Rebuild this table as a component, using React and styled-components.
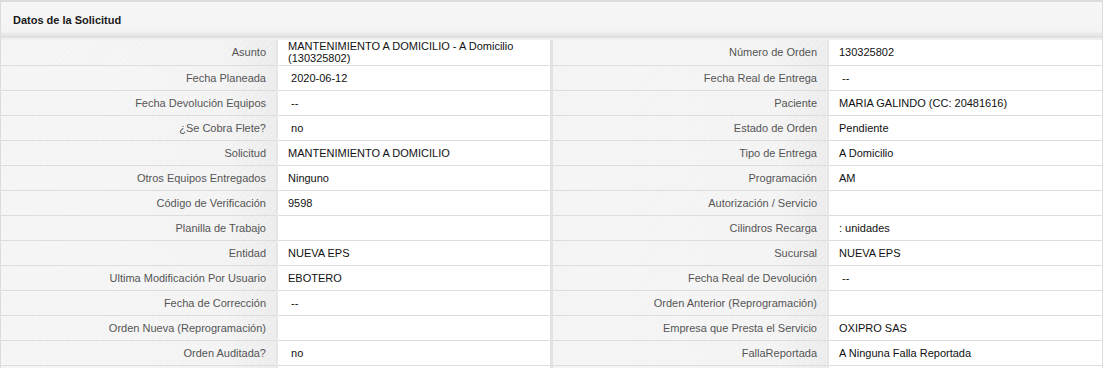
import React from 'react';
import styled, { createGlobalStyle } from 'styled-components';

const GlobalStyle = createGlobalStyle`
  body {
    margin: 0;
    background: #ffffff;
    font-family: "Liberation Sans", Arial, sans-serif;
  }
`;

const Panel = styled.div`
  width: 1103px;
  border: 1px solid #dcdcdc;
  border-top-width: 2px;
  box-sizing: border-box;
  background: #ffffff;
`;

const PanelHeader = styled.div`
  height: 36px;
  display: flex;
  align-items: center;
  padding: 0 12px;
  background: linear-gradient(to bottom, #f6f6f6 0%, #f4f4f4 80%, #e6e6e6 92%, #dedede 100%);
  border-bottom: 2px solid #f0f0f0;
  font-size: 11px;
  font-weight: bold;
  color: #1a1a1a;
`;

const Table = styled.table`
  width: 100%;
  border-collapse: collapse;
  table-layout: fixed;
  font-size: 11px;
`;

const Row = styled.tr`
  height: 25px;
  border-bottom: 1px solid #dddddd;
`;

const LabelCell = styled.td`
  box-sizing: border-box;
  padding: 0 10px;
  text-align: right;
  color: #555555;
  line-height: 12px;
  vertical-align: middle;
  border-left: ${({ $split }) => ($split ? '3px solid #e2e2e2' : 'none')};
  border-right: 2px solid #e6e6e6;
  background:
    repeating-linear-gradient(135deg, rgba(255, 255, 255, 0.18) 0 2px, rgba(0, 0, 0, 0) 2px 5px),
    linear-gradient(to right, #f4f4f4 0%, #f3f3f3 80%, #ebebeb 100%);
`;

const ValueCell = styled.td`
  box-sizing: border-box;
  padding: 0 10px;
  color: #111111;
  line-height: 12px;
  vertical-align: middle;
  background: #ffffff;
  white-space: pre-wrap;
`;

const rows = [
  ['Asunto', 'MANTENIMIENTO A DOMICILIO - A Domicilio\n(130325802)', 'Número de Orden', '130325802'],
  ['Fecha Planeada', ' 2020-06-12', 'Fecha Real de Entrega', ' --'],
  ['Fecha Devolución Equipos', ' --', 'Paciente', 'MARIA GALINDO (CC: 20481616)'],
  ['¿Se Cobra Flete?', ' no', 'Estado de Orden', 'Pendiente'],
  ['Solicitud', 'MANTENIMIENTO A DOMICILIO', 'Tipo de Entrega', 'A Domicilio'],
  ['Otros Equipos Entregados', 'Ninguno', 'Programación', 'AM'],
  ['Código de Verificación', '9598', 'Autorización / Servicio', ''],
  ['Planilla de Trabajo', '', 'Cilindros Recarga', ': unidades'],
  ['Entidad', 'NUEVA EPS', 'Sucursal', 'NUEVA EPS'],
  ['Ultima Modificación Por Usuario', 'EBOTERO', 'Fecha Real de Devolución', ' --'],
  ['Fecha de Corrección', ' --', 'Orden Anterior (Reprogramación)', ''],
  ['Orden Nueva (Reprogramación)', '', 'Empresa que Presta el Servicio', 'OXIPRO SAS'],
  ['Orden Auditada?', ' no', 'FallaReportada', 'A Ninguna Falla Reportada'],
  ['', '', '', ''],
];

const App = () => (
  <>
    <GlobalStyle />
    <Panel>
      <PanelHeader>Datos de la Solicitud</PanelHeader>
      <Table>
        <colgroup>
          <col style={{ width: 276 }} />
          <col style={{ width: 274 }} />
          <col style={{ width: 277 }} />
          <col />
        </colgroup>
        <tbody>
          {rows.map(([l1, v1, l2, v2], i) => (
            <Row key={i}>
              <LabelCell>{l1}</LabelCell>
              <ValueCell>{v1}</ValueCell>
              <LabelCell $split>{l2}</LabelCell>
              <ValueCell>{v2}</ValueCell>
            </Row>
          ))}
        </tbody>
      </Table>
    </Panel>
  </>
);

export default App;
